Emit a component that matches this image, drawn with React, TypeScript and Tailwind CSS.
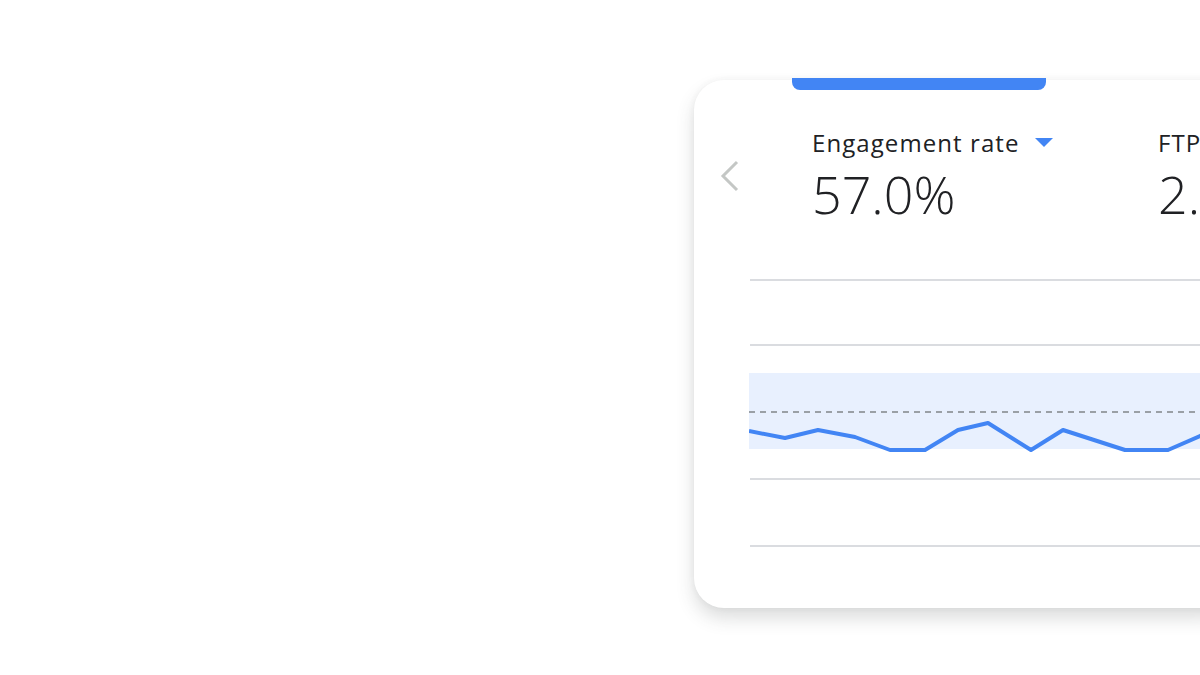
import React from 'react'

const points: [number, number][] = [
  [0, 161], [36, 168], [69, 160], [106, 167], [141, 180], [176, 180], [209, 160],
  [239, 153], [282, 180], [314, 160], [376, 180], [419, 180], [451, 166], [470, 158],
]

const Metric = ({ label, value, caret }: { label: string; value: string; caret?: boolean }) => (
  <div className="flex flex-col">
    <div className="flex items-center gap-[15px] text-[24px] leading-[30px] tracking-[0.045em] text-[#202124]">
      <span>{label}</span>
      {caret && (
        <svg width="18" height="10" viewBox="0 0 18 10">
          <path d="M0 0 H18 L9 9 Z" fill="#4285f4" />
        </svg>
      )}
    </div>
    <div className="mt-[8px] text-[52px] leading-[56px] font-light text-[#202124]">{value}</div>
  </div>
)

export default function App() {
  return (
    <div
      className="w-[1200px] h-[675px] overflow-hidden bg-white pt-[80px] pl-[694px]"
      style={{ fontFamily: '"Open Sans", Roboto, sans-serif' }}
    >
      <div className="relative w-[540px] h-[528px] rounded-[30px] bg-white shadow-[0_10px_18px_rgba(60,64,67,0.18),0_0_6px_rgba(60,64,67,0.06)]">
        <div className="absolute left-[98px] top-[-2px] w-[254px] h-[12px] rounded-b-[8px] bg-[#4285f4]" />

        <div className="flex items-start pt-[48px]">
          <svg className="ml-[26px] mt-[32px]" width="20" height="32" viewBox="0 0 20 32">
            <path d="M17 2 L3 16 L17 30" fill="none" stroke="#c4c7c5" strokeWidth="3" />
          </svg>
          <div className="ml-[72px] w-[346px] shrink-0">
            <Metric label="Engagement rate" value="57.0%" caret />
          </div>
          <div className="shrink-0">
            <Metric label="FTP" value="2.4" />
          </div>
        </div>

        <svg className="ml-[55px] mt-[48px]" width="485" height="290" viewBox="0 0 485 290">
          <rect x="0" y="103" width="485" height="76" fill="#e8f0fe" />
          {[10, 75, 209, 276].map((y) => (
            <line key={y} x1="1" x2="485" y1={y} y2={y} stroke="#dadce0" strokeWidth="2" />
          ))}
          <line x1="0" x2="485" y1="142" y2="142" stroke="#9aa0a6" strokeWidth="2" strokeDasharray="6 5" />
          <polyline
            points={points.map((p) => p.join(',')).join(' ')}
            fill="none"
            stroke="#4285f4"
            strokeWidth="4"
            strokeLinejoin="round"
          />
        </svg>
      </div>
    </div>
  )
}
